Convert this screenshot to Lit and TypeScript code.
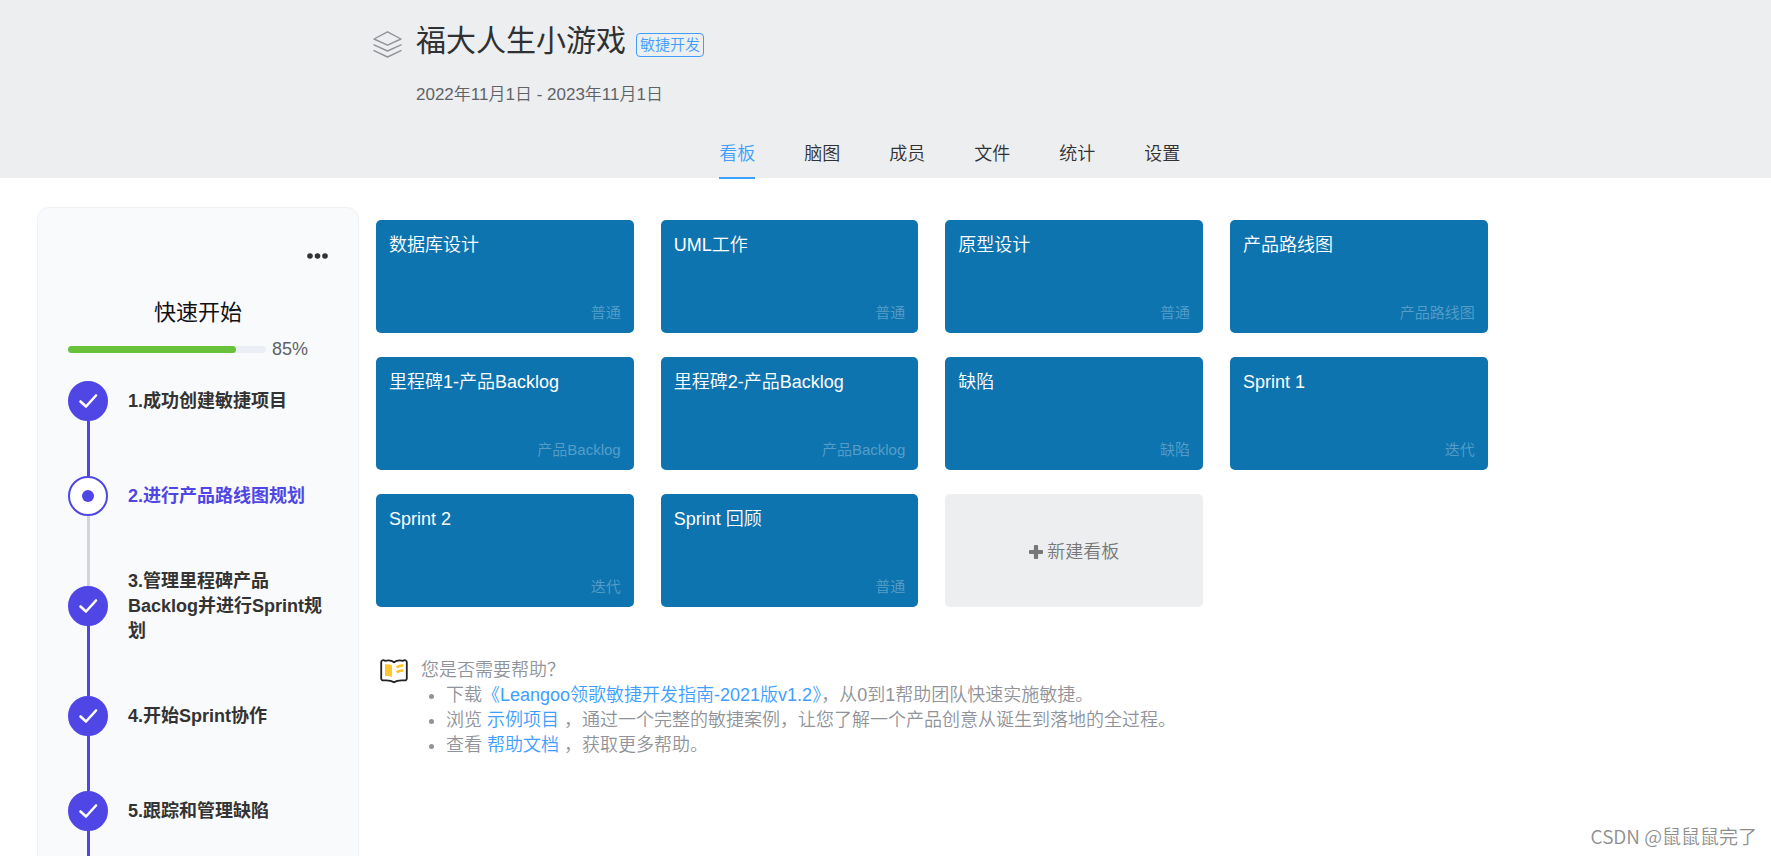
import { LitElement, html, css, svg, nothing } from "lit";
import { customElement, property, state } from "lit/decorators.js";
import { classMap } from "lit/directives/class-map.js";

interface Step {
  title: string;
  done: boolean;
}

interface Board {
  name: string;
  kind: string;
}

const TABS = ["看板", "脑图", "成员", "文件", "统计", "设置"];

const STEPS: Step[] = [
  { title: "1.成功创建敏捷项目", done: true },
  { title: "2.进行产品路线图规划", done: false },
  { title: "3.管理里程碑产品Backlog并进行Sprint规划", done: true },
  { title: "4.开始Sprint协作", done: true },
  { title: "5.跟踪和管理缺陷", done: true },
];

const BOARDS: Board[] = [
  { name: "数据库设计", kind: "普通" },
  { name: "UML工作", kind: "普通" },
  { name: "原型设计", kind: "普通" },
  { name: "产品路线图", kind: "产品路线图" },
  { name: "里程碑1-产品Backlog", kind: "产品Backlog" },
  { name: "里程碑2-产品Backlog", kind: "产品Backlog" },
  { name: "缺陷", kind: "缺陷" },
  { name: "Sprint 1", kind: "迭代" },
  { name: "Sprint 2", kind: "迭代" },
  { name: "Sprint 回顾", kind: "普通" },
];

@customElement("project-header")
export class ProjectHeader extends LitElement {
  @state() private active = 0;

  static styles = css`
    :host {
      display: grid;
      grid-template-columns: 29px 1fr;
      column-gap: 14px;
      padding: 20px 16% 0 373px;
      background: #eceef0;
    }
    .layers {
      width: 29px;
      height: 29px;
      margin-top: 10px;
    }
    .title-row {
      display: flex;
      align-items: center;
      gap: 10px;
    }
    h1 {
      margin: 0;
      font-size: 30px;
      line-height: 42px;
      font-weight: 400;
      color: #303133;
    }
    .tag {
      margin-top: 8px;
      padding: 0 3px;
      border: 1px solid #409eff;
      border-radius: 4px;
      font-size: 15px;
      line-height: 22px;
      color: #409eff;
    }
    .dates {
      margin: 20px 0 34px;
      font-size: 17px;
      line-height: 25px;
      color: #606266;
    }
    nav {
      display: flex;
      justify-content: center;
      gap: 49px;
      margin: 0 4px -1px 0;
    }
    .tab {
      padding: 0 0 9px;
      border-bottom: 2px solid transparent;
      font-size: 18px;
      line-height: 27px;
      color: #303133;
      text-decoration: none;
    }
    .tab.active {
      color: #409eff;
      border-color: #409eff;
    }
  `;

  render() {
    return html`
      <svg class="layers" viewBox="0 0 29 29" fill="none" stroke="#909399" stroke-width="1.4" stroke-linejoin="round" stroke-linecap="round" aria-hidden="true">
        <path d="M14.5 1.8 28 9l-13.500 6.200L1 9z" />
        <path d="M1 14.800l13.500 6.200L28 14.800M1 20.600l13.500 6.400L28 20.600" />
      </svg>
      <div>
        <div class="title-row">
          <h1>福大人生小游戏</h1>
          <span class="tag">敏捷开发</span>
        </div>
        <p class="dates">2022年11月1日 - 2023年11月1日</p>
        <nav>
          ${TABS.map(
            (t, i) => html`<a
              href="#${i}"
              class=${classMap({ tab: true, active: i === this.active })}
              aria-current=${i === this.active ? "page" : nothing}
              @click=${(e: Event) => {
                e.preventDefault();
                this.active = i;
              }}
              >${t}</a
            >`
          )}
        </nav>
      </div>
    `;
  }
}

@customElement("quick-start")
export class QuickStart extends LitElement {
  @property({ type: Number }) percent = 85;

  static styles = css`
    :host {
      display: block;
      box-sizing: border-box;
      padding: 37px 30px 0;
      border: 1px solid #eff1f4;
      border-radius: 12px 12px 0 0;
      background: #f9fafc;
    }
    .top {
      display: flex;
      justify-content: flex-end;
    }
    .more {
      display: flex;
      padding: 8px 0;
      border: 0;
      background: none;
      cursor: pointer;
    }
    h2 {
      margin: 31px 0 10px;
      text-align: center;
      font-size: 22px;
      line-height: 30px;
      font-weight: 400;
      color: #111;
    }
    .progress {
      display: flex;
      align-items: center;
      gap: 6px;
      margin-right: 20px;
      font-size: 18px;
      line-height: 22px;
      color: #606266;
    }
    .track {
      flex: 1;
      height: 7px;
      border-radius: 4px;
      background: #ebeef5;
    }
    .fill {
      height: 100%;
      border-radius: 4px;
      background: #67c23a;
    }
    ol {
      margin: -7px 0 0;
      padding: 0;
      list-style: none;
    }
    li {
      display: flex;
      gap: 20px;
    }
    .marker {
      display: flex;
      flex-direction: column;
      align-items: center;
    }
    .line {
      flex: 1;
      width: 3px;
      background: #4f46e5;
    }
    .line.pending {
      background: #d1d5db;
    }
    .line.none {
      background: none;
    }
    .dot {
      display: flex;
      align-items: center;
      justify-content: center;
      box-sizing: border-box;
      width: 40px;
      height: 40px;
      border: 2px solid #4f46e5;
      border-radius: 50%;
      background: #4f46e5;
    }
    .dot.current {
      background: #fff;
    }
    .dot.current::after {
      content: "";
      width: 12px;
      height: 12px;
      border-radius: 50%;
      background: #4f46e5;
    }
    .label {
      flex: 1;
      display: flex;
      align-items: center;
      min-height: 45px;
      padding: 26px 0 24px;
      font-size: 18px;
      line-height: 25px;
      font-weight: 700;
      color: #333;
    }
    .label.current {
      color: #4f46e5;
    }
  `;

  private lineClass(step?: Step) {
    return classMap({ line: true, none: !step, pending: !!step && !step.done });
  }

  render() {
    return html`
      <div class="top">
        <button class="more" aria-label="更多">
          <svg width="21" height="6" viewBox="0 0 21 6" fill="#333">
            <circle cx="3" cy="3" r="2.800" />
            <circle cx="10.500" cy="3" r="2.800" />
            <circle cx="18" cy="3" r="2.800" />
          </svg>
        </button>
      </div>
      <h2>快速开始</h2>
      <div class="progress">
        <div class="track" role="progressbar" aria-label="进度" aria-valuenow=${this.percent}>
          <div class="fill" style="width:${this.percent}%"></div>
        </div>
        <span>${this.percent}%</span>
      </div>
      <ol>
        ${STEPS.map(
          (s, i) => html`<li>
            <div class="marker">
              <div class=${this.lineClass(STEPS[i - 1])}></div>
              <div class=${classMap({ dot: true, current: !s.done })}>
                ${s.done
                  ? html`<svg width="20" height="16" viewBox="0 0 20 16" fill="none" stroke="#fff" stroke-width="2.600" stroke-linecap="round" stroke-linejoin="round">
                      <path d="M2.500 8.500l5.500 5L18 2.500" />
                    </svg>`
                  : nothing}
              </div>
              <div class=${this.lineClass(s)}></div>
            </div>
            <div class=${classMap({ label: true, current: !s.done })}><span>${s.title}</span></div>
          </li>`
        )}
      </ol>
    `;
  }
}

@customElement("board-grid")
export class BoardGrid extends LitElement {
  static styles = css`
    :host {
      display: grid;
      grid-template-columns: repeat(4, 1fr);
      grid-auto-rows: 113px;
      gap: 24px 27px;
    }
    .card {
      display: flex;
      flex-direction: column;
      justify-content: space-between;
      padding: 13px 13px 10px;
      border-radius: 5px;
      background: #0e74b0;
      color: #fff;
      font-size: 18px;
      line-height: 25px;
      text-decoration: none;
    }
    .kind {
      align-self: flex-end;
      font-size: 15px;
      line-height: 20px;
      color: #569ec8;
    }
    .add {
      display: flex;
      align-items: center;
      justify-content: center;
      gap: 4px;
      padding: 3px 0 0;
      border: 0;
      border-radius: 5px;
      background: #eceef0;
      color: #777;
      font: inherit;
      font-size: 18px;
      line-height: 25px;
      cursor: pointer;
    }
  `;

  render() {
    return html`
      ${BOARDS.map(
        (b) => html`<a class="card" href="#board"><span>${b.name}</span><span class="kind">${b.kind}</span></a>`
      )}
      <button class="add">
        <svg width="14" height="14" viewBox="0 0 14 14" fill="#777" aria-hidden="true">
          <path d="M5.900 0h2.200q1 0 1 1v3.900H13q1 0 1 1v2.200q0 1-1 1H9.100V13q0 1-1 1H5.900q-1 0-1-1V9.100H1q-1 0-1-1V5.900q0-1 1-1h3.900V1q0-1 1-1z" />
        </svg>
        新建看板
      </button>
    `;
  }
}

@customElement("help-tips")
export class HelpTips extends LitElement {
  static styles = css`
    :host {
      display: flex;
      gap: 13px;
      padding-left: 4px;
      font-size: 18px;
      line-height: 25px;
      color: #909399;
    }
    .book {
      flex: none;
      width: 28px;
      height: 25px;
      margin-top: 1px;
    }
    p {
      margin: 0;
    }
    ul {
      margin: 0;
      padding-left: 25px;
    }
    a {
      color: #409eff;
      text-decoration: none;
    }
  `;

  private book() {
    return svg`
      <path d="M14 3.200C11.500 1.200 8 1.200 5 1.800 3.500.800 1.200 1 1.200 3v16.500c0 1.500 1 2 2.500 1.900 4-.300 7.500-.200 10.300 1.900 2.800-2.100 6.300-2.200 10.300-1.900 1.500.100 2.500-.400 2.500-1.900V3c0-2-2.300-2.200-3.800-1.200-3-.600-6.500-.600-9 1.400z"
        fill="#fff" stroke="#222" stroke-width="1.800" stroke-linejoin="round" />
      <path d="M5 5.500c2.500-.500 5 0 7 1v11.500c-2-1-4.500-1.300-7-.800z" fill="#ffc72e" />
      <path d="M16.500 8.300q3-1.800 6.800-2M16.500 13.300q3-1.600 6.800-1.900" fill="none" stroke="#ffc72e" stroke-width="2.800" />
    `;
  }

  render() {
    return html`
      <svg class="book" viewBox="0 0 28 25" aria-hidden="true">${this.book()}</svg>
      <div>
        <p>您是否需要帮助？</p>
        <ul>
          <li>下载<a href="#guide">《Leangoo领歌敏捷开发指南-2021版v1.2》</a>，从0到1帮助团队快速实施敏捷。</li>
          <li>浏览 <a href="#sample">示例项目</a> ，通过一个完整的敏捷案例，让您了解一个产品创意从诞生到落地的全过程。</li>
          <li>查看 <a href="#docs">帮助文档</a> ，获取更多帮助。</li>
        </ul>
      </div>
    `;
  }
}

@customElement("app-root")
export class AppRoot extends LitElement {
  static styles = css`
    :host {
      display: flex;
      flex-direction: column;
      height: 100vh;
      overflow: hidden;
      background: #fff;
      font-family: "Liberation Sans", "Noto Sans CJK SC", sans-serif;
      font-weight: 350;
    }
    .body {
      flex: 1;
      display: flex;
      gap: 17px;
      padding: 29px 16% 0 37px;
    }
    quick-start {
      flex: none;
      width: 322px;
    }
    main {
      flex: 1;
      display: flex;
      flex-direction: column;
      gap: 51px;
      padding-top: 13px;
    }
    .watermark {
      position: absolute;
      right: 14px;
      bottom: 6px;
      font-family: "Noto Sans CJK SC", sans-serif;
      font-size: 19px;
      line-height: 28px;
      color: #8f8f8f;
    }
  `;

  render() {
    return html`
      <project-header></project-header>
      <div class="body">
        <quick-start .percent=${85}></quick-start>
        <main>
          <board-grid></board-grid>
          <help-tips></help-tips>
        </main>
      </div>
      <span class="watermark">CSDN @鼠鼠鼠完了</span>
    `;
  }
}
